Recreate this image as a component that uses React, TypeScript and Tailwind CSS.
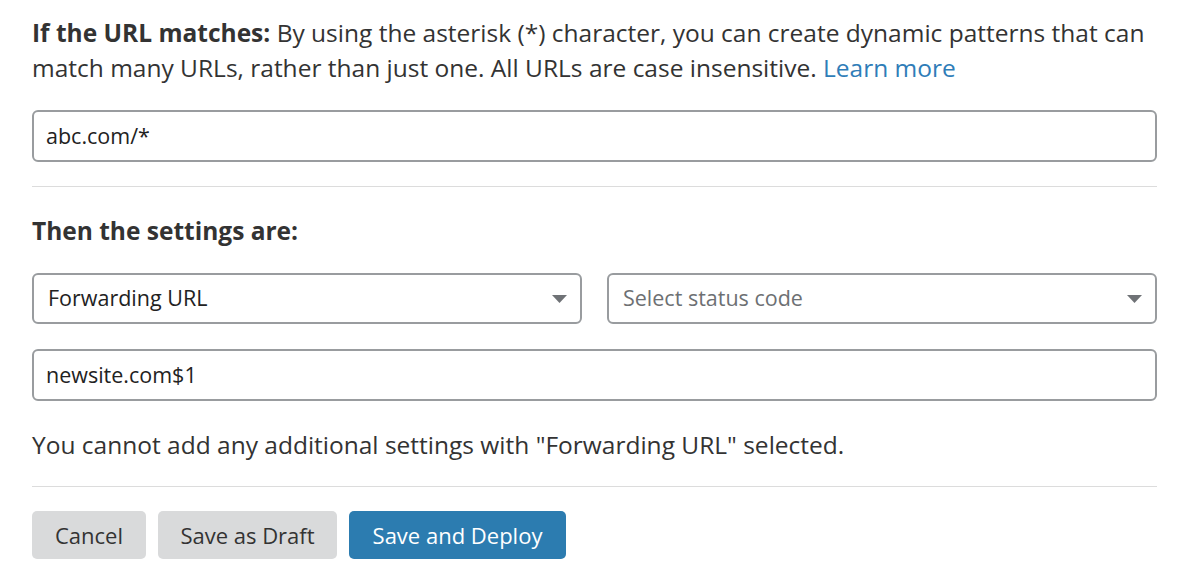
import React from "react";

const Caret: React.FC = () => (
  <svg width="15" height="8" viewBox="0 0 15 8" className="shrink-0">
    <path d="M0 0 L15 0 L7.5 8 Z" fill="#6f7276" />
  </svg>
);

const SelectBox: React.FC<{ label: string; placeholder?: boolean }> = ({ label, placeholder }) => (
  <div className="flex-1 h-[51px] border-2 border-[#999c9f] rounded-[6px] flex items-center justify-between pl-[14px] pr-[13px] bg-white">
    <span className={`text-[21.5px] ${placeholder ? "text-[#6d7073]" : "text-[#222]"}`}>{label}</span>
    <Caret />
  </div>
);

const TextBox: React.FC<{ value: string }> = ({ value }) => (
  <div className="h-[52px] border-2 border-[#999c9f] rounded-[6px] flex items-center px-[12px] bg-white">
    <span className="text-[21.5px] text-[#222]">{value}</span>
  </div>
);

export default function App() {
  return (
    <div
      className="w-[1195px] h-[572px] bg-white text-[#333] overflow-hidden"
      style={{ fontFamily: '"Open Sans", "Noto Sans", sans-serif' }}
    >
      <div className="w-[1125px] ml-[32px] pt-[15px]">
        <p className="text-[24.5px] leading-[35px]">
          <span className="font-bold">If the URL matches:</span> By using the asterisk (*) character, you can create
          dynamic patterns that can match many URLs, rather than just one. All URLs are case insensitive.{" "}
          <a className="text-[#2f7db8]">Learn more</a>
        </p>
        <div className="mt-[25px]">
          <TextBox value="abc.com/*" />
        </div>
        <div className="mt-[24px] border-t border-[#dcdcdc]" />
        <h2 className="mt-[26px] text-[24.5px] leading-[35px] font-bold">Then the settings are:</h2>
        <div className="mt-[25px] flex gap-[25px]">
          <SelectBox label="Forwarding URL" />
          <SelectBox label="Select status code" placeholder />
        </div>
        <div className="mt-[25px]">
          <TextBox value="newsite.com$1" />
        </div>
        <p className="mt-[26px] text-[24.5px] leading-[35px]">
          You cannot add any additional settings with "Forwarding URL" selected.
        </p>
        <div className="mt-[24px] border-t border-[#dcdcdc]" />
        <div className="mt-[24px] flex gap-[12px]">
          <button className="h-[48px] w-[114px] rounded-[5px] bg-[#d9dadb] text-[22px] text-[#333]">Cancel</button>
          <button className="h-[48px] w-[179px] rounded-[5px] bg-[#d9dadb] text-[22px] text-[#333]">Save as Draft</button>
          <button className="h-[48px] w-[217px] rounded-[5px] bg-[#2c7cb0] text-[22px] text-white">Save and Deploy</button>
        </div>
      </div>
    </div>
  );
}
